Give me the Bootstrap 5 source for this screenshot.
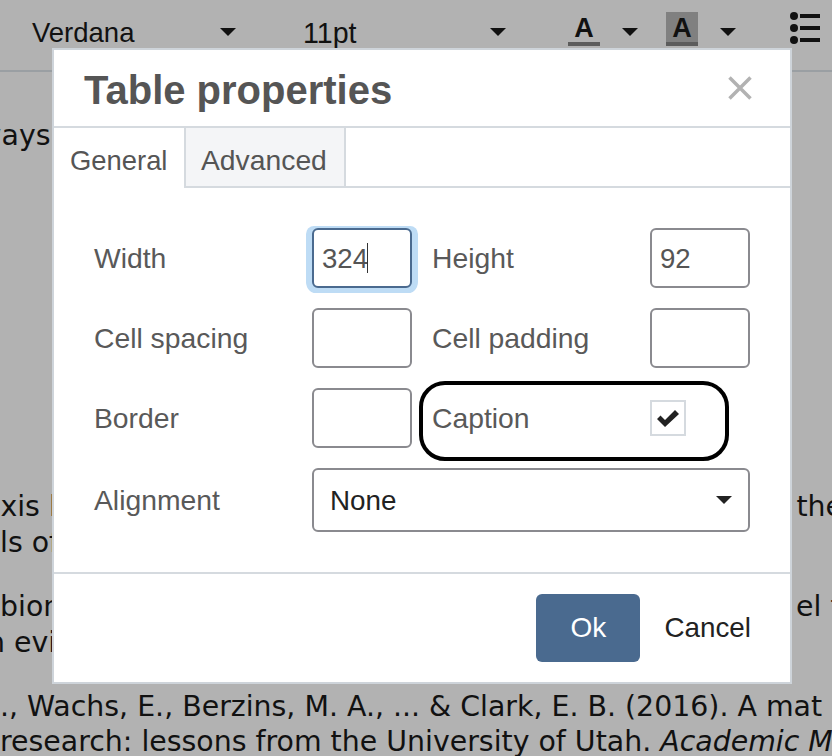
<!DOCTYPE html>
<html lang="en">
<head>
<meta charset="utf-8">
<title>Table properties</title>
<link rel="stylesheet" href="https://cdn.jsdelivr.net/npm/bootstrap@5.3.0/dist/css/bootstrap.min.css">
<style>
html,body{height:756px;overflow:hidden}
body{background:#b2b2b2;font-family:"Liberation Sans",Arial,sans-serif;font-size:27.5px;color:#111;position:relative}
.tbar{height:72px;border-bottom:2px solid #9a9fa3;padding-left:32px}
.tb-label{line-height:30px;margin-top:18px}
.tb-font{width:188px}
.tb-size{width:187px;margin-left:67px;font-size:28.6px}
.tri{width:0;height:0;border-left:8px solid transparent;border-right:8px solid transparent;border-top:8px solid #111;flex:none;margin-top:28px}
.swatch{width:32px;height:34px;margin-top:12px;border-bottom:4px solid #5c5c5c;text-align:center;font-weight:700;line-height:33px;font-size:27px}
.swatch-on{background:#808080}
.sw-1{margin-left:62px}
.sw-2{margin-left:28px}
.tri-s{margin-left:22px}
.lst{margin-top:10px;margin-left:52px;flex:none}
.doc{font-family:"DejaVu Sans",Verdana,sans-serif;font-size:28.4px;line-height:36px;white-space:nowrap;overflow:hidden;color:#111}
.doc-line{height:36px;display:flex;justify-content:space-between}
.doc-a{margin-top:46px}
.gap-b{margin-top:335px}
.gap-c{margin-top:28px}
.gap-d{margin-top:28px}
.doc-tail{margin-top:-1px}
.off1{margin-left:-47px}
.off2{margin-left:-17px}
.off3{margin-left:-13px}
.off4{margin-right:-11px}
.off5{margin-right:-27px}
.dlg{position:absolute;left:52px;top:48px;width:740px;height:636px;background:#fff;border:2px solid #ced4da;color:#555}
.dlg-head{height:78px;border-bottom:2px solid #d5dadf;padding:4px 30px 0}
.dlg-title{font-size:40px;font-weight:700;line-height:1;margin:0;color:#555}
.dlg-x{background:none;border:0;padding:0;margin-right:8px;margin-top:-4px;display:block;line-height:0}
.dlg-tabs{height:60px;border-bottom:2px solid #d5dadf}
.dlg-tab{height:60px;line-height:66px;color:#555;white-space:nowrap}
.tab-on{width:132px;padding-left:16px;font-size:27.4px;background:#fff;border-right:2px solid #d5dadf}
.tab-off{width:160px;padding-left:15px;font-size:28.3px;background:#f4f5f7;border-right:2px solid #d5dadf;height:58px;line-height:64px}
.dlg-body{height:384px;padding:40px 40px 0;display:grid;grid-template-columns:198px 100px 198px 100px;column-gap:20px;grid-auto-rows:60px;row-gap:20px;font-size:28.3px}
.dlg-lbl{display:flex;align-items:center;color:#595959;white-space:nowrap;padding-top:1px}
.lbl-align{padding-top:5px}
.fld{height:60px;width:100px;border:2px solid #8a8a8f;border-radius:6px;font-size:27.6px;color:#555;padding:2px 8px 0;box-shadow:none;font-family:inherit}
.fld:focus{border-color:#8a8a8f;box-shadow:none}
.fld-focus,.fld-focus:focus{border-color:#4a6a8f;box-shadow:0 0 0 6px #bedcf5;clip-path:inset(-2px -6px -5px -6px round 8px)}
.fld-wrap{position:relative;height:60px}
.caret-bar{position:absolute;left:55px;top:15px;width:1px;height:30px;background:#333}
.cap-cell{position:relative;display:flex;align-items:center;justify-content:flex-start;height:60px}
.cap-ring{position:absolute;left:-13px;top:-7px;width:310px;height:80px;border:4px solid #000;border-radius:26px;pointer-events:none}
.cap-check{width:36px;height:36px;border:2px solid #d5dadf;background:#fff;display:flex;align-items:center;justify-content:center}
.sel{grid-column:2 / span 3;height:64px;border:2px solid #8a8a8f;border-radius:6px;font-size:27.8px;color:#222;padding:2px 0 0 16px;font-family:inherit;box-shadow:none;background-image:url("data:image/svg+xml,%3Csvg xmlns='http://www.w3.org/2000/svg' width='16' height='8'%3E%3Cpath d='M0 0h16L8 8z' fill='%23222'/%3E%3C/svg%3E");background-position:right 16px center;background-size:16px 8px}
.dlg-foot{height:108px;border-top:2px solid #d5dadf;padding:20px 39px 0 0;gap:24px}
.btn-ok{width:104px;height:68px;background:#4a6a8f;border:0;border-radius:6px;color:#fff;font-size:28px;padding:0}
.btn-no{background:none;border:0;color:#222;font-size:27.8px;padding:0;height:68px;line-height:68px}
</style>
</head>
<body>
<div class="tbar d-flex align-items-start">
  <div class="tb-label tb-font">Verdana</div>
  <div class="tri"></div>
  <div class="tb-label tb-size">11pt</div>
  <div class="tri"></div>
  <div class="swatch sw-1">A</div>
  <div class="tri tri-s"></div>
  <div class="swatch swatch-on sw-2">A</div>
  <div class="tri tri-s"></div>
  <svg class="lst" width="32" height="36" viewBox="0 0 32 36" fill="#111" aria-hidden="true"><circle cx="6" cy="6" r="4"/><circle cx="6" cy="18" r="4"/><circle cx="6" cy="30" r="4"/><rect x="12" y="4" width="20" height="4"/><rect x="12" y="16" width="20" height="4"/><rect x="12" y="28" width="20" height="4"/></svg>
</div>
<div class="doc">
  <div class="doc-line doc-a"><span class="off1">always</span></div>
  <div class="doc-line gap-b"><span class="off2">axis l</span><span class="off4">the</span></div>
  <div class="doc-line"><span>ls of</span></div>
  <div class="doc-line gap-c"><span>biom</span><span class="off5">el to</span></div>
  <div class="doc-line"><span class="off3">n evi</span></div>
  <div class="doc-line gap-d"><span>., Wachs, E., Berzins, M. A., ... &amp; Clark, E. B. (2016). A mat</span></div>
  <div class="doc-line doc-tail"><span>research: lessons from the University of Utah. <em>Academic Me</em></span></div>
</div>
<div class="dlg">
  <div class="dlg-head d-flex align-items-center justify-content-between">
    <h1 class="dlg-title">Table properties</h1>
    <button class="dlg-x" type="button" aria-label="Close"><svg width="24" height="24" viewBox="0 0 24 24" aria-hidden="true"><path d="M1.5 1.500 22.500 22.500M22.500 1.500 1.500 22.500" stroke="#b2b2b2" stroke-width="3.500" fill="none"/></svg></button>
  </div>
  <div class="dlg-tabs d-flex">
    <div class="dlg-tab tab-on">General</div>
    <div class="dlg-tab tab-off">Advanced</div>
  </div>
  <div class="dlg-body">
    <div class="dlg-lbl">Width</div>
    <div class="fld-wrap"><input class="form-control fld fld-focus" value="324" aria-label="Width"><span class="caret-bar"></span></div>
    <div class="dlg-lbl">Height</div>
    <input class="form-control fld" value="92" aria-label="Height">
    <div class="dlg-lbl">Cell spacing</div>
    <input class="form-control fld" aria-label="Cell spacing">
    <div class="dlg-lbl">Cell padding</div>
    <input class="form-control fld" aria-label="Cell padding">
    <div class="dlg-lbl">Border</div>
    <input class="form-control fld" aria-label="Border">
    <div class="dlg-lbl cap-cell">Caption<span class="cap-ring"></span></div>
    <div class="cap-cell"><span class="cap-check"><svg width="22" height="18" viewBox="0 0 22 18" aria-hidden="true"><path d="M0 10 3.500 6.500 8 11 18 1 22 5 8 18Z" fill="#222"/></svg></span></div>
    <div class="dlg-lbl lbl-align">Alignment</div>
    <select class="form-select sel" aria-label="Alignment"><option>None</option></select>
  </div>
  <div class="dlg-foot d-flex justify-content-end align-items-start">
    <button class="btn btn-ok" type="button">Ok</button>
    <button class="btn btn-no" type="button">Cancel</button>
  </div>
</div>
</body>
</html>
